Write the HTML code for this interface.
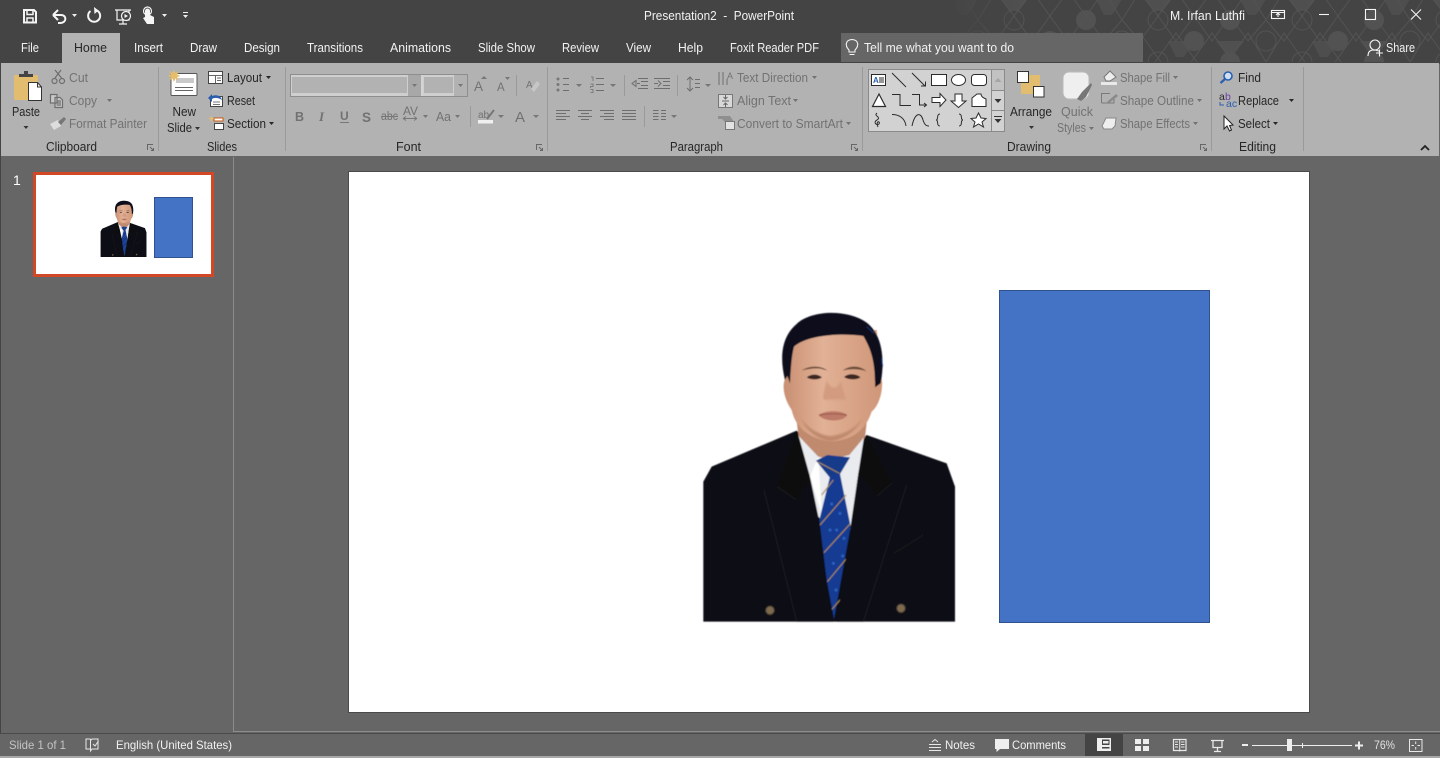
<!DOCTYPE html>
<html><head><meta charset="utf-8"><style>
html,body{margin:0;padding:0;background:#666;overflow:hidden}
svg{display:block}
text{font-family:"Liberation Sans",sans-serif;font-size:12.5px;white-space:pre}
.d{fill:#262626}.g{fill:#727272}.w{fill:#f2f2f2}
.l{stroke:#262626;fill:none}.n{stroke:#6e6e6e;fill:none}.wl{stroke:#f5f5f5;fill:none}
</style></head><body>
<svg xmlns="http://www.w3.org/2000/svg" width="1440" height="758" viewBox="0 0 1440 758">
<defs>
<pattern id="hx" width="144" height="84" patternUnits="userSpaceOnUse" x="1122" y="-1">
<polygon points="22,0 50,0 36,18" fill="#4f4f4f"/>
<polygon points="94,42 122,42 108,60" fill="#505050"/>
<polygon points="118,0 144,0 134,16 126,16" fill="#4e4e4e"/>
<polygon points="46,42 72,42 62,58 54,58" fill="#4e4e4e"/>
<circle cx="36" cy="21" r="10" fill="#444" stroke="#535353"/>
<circle cx="108" cy="21" r="10" fill="#525252"/>
<circle cx="0" cy="42" r="10" fill="#444" stroke="#535353"/>
<circle cx="144" cy="42" r="10" fill="#444" stroke="#535353"/>
<circle cx="72" cy="42" r="10" fill="#525252"/>
<circle cx="36" cy="63" r="10" fill="#444" stroke="#535353"/>
<circle cx="108" cy="63" r="10" fill="#525252"/>
<g fill="none" stroke="#535353" stroke-width="1">
<path d="M0,21 L18,-8 L54,42 L90,-8 L126,42 L144,21"/>
<path d="M0,21 L18,42 L54,-8 L90,42 L126,-8 L144,21"/>
<path d="M0,63 L18,34 L54,84 L90,34 L126,84 L144,63"/>
<path d="M0,63 L18,84 L54,34 L90,84 L126,34 L144,63"/>
</g>
</pattern>
<linearGradient id="fd" x1="0" x2="1" y1="0" y2="0"><stop offset="0" stop-color="#000"/><stop offset=".14" stop-color="#fff"/></linearGradient>
<mask id="fm"><rect x="945" y="0" width="495" height="64" fill="url(#fd)"/></mask>
<linearGradient id="sk" x1="0" x2="1" y1="0" y2="0"><stop offset="0" stop-color="#c98f72"/><stop offset=".4" stop-color="#e2b196"/><stop offset="1" stop-color="#cf9678"/></linearGradient>
<filter id="bl"><feGaussianBlur stdDeviation="2.500"/></filter>
<filter id="soft" x="-5%" y="-5%" width="110%" height="110%"><feGaussianBlur stdDeviation="1.200"/></filter>
<g id="person">
<g filter="url(#soft)">
<path d="M40,965 L40,545 L65,500 L320,392 L430,500 L530,405 L770,490 L795,560 L795,965Z" fill="#111113"/>
<path d="M318,350 L326,410 L390,475 L478,470 L525,412 L532,350Z" fill="#c08a6e"/>
<path d="M326,408 L385,470 L420,478 L478,465 L522,412 L505,520 L482,690 L430,700 L385,650 L360,530Z" fill="#e9ebee"/>
<path d="M360,530 L395,640 L385,470Z" fill="#fff"/>
<path d="M378,482 L412,465 L480,472 L450,522 L422,536Z" fill="#123a8a"/>
<path d="M420,530 L450,522 L482,680 L432,958 L410,840 L388,660Z" fill="#123a92"/>
<g stroke="#a98a55" stroke-width="3.200" fill="none"><path d="M384,486 L448,520"/><path d="M395,585 L430,540"/><path d="M390,675 L468,585"/><path d="M402,758 L480,672"/><path d="M412,845 L470,775"/><path d="M426,928 L454,895"/></g>
<g fill="#2a63c0"><circle cx="425" cy="612" r="4.500"/><circle cx="450" cy="640" r="4.500"/><circle cx="420" cy="690" r="4.500"/><circle cx="440" cy="690" r="4.500"/><circle cx="462" cy="715" r="4.500"/><circle cx="430" cy="790" r="4.500"/><circle cx="458" cy="768" r="4.500"/><circle cx="438" cy="870" r="4.500"/></g>
<path d="M320,392 L260,560 L320,600 L358,540Z" fill="#0f0f11"/>
<path d="M222,570 L262,560 L320,600 L358,540 L425,940 L430,965 L320,965Z" fill="#111113"/>
<path d="M530,405 L505,520 L560,585 L605,550Z" fill="#0f0f11"/>
<path d="M650,555 L562,587 L505,520 L440,965 L520,965Z" fill="#111113"/>
<path d="M222,570 L320,965 M650,555 L520,965 M262,560 L320,600 M562,587 L605,550 M612,760 L700,705" stroke="#222226" stroke-width="2" fill="none"/>
<path d="M284,240 C276,262 283,298 305,330 C315,372 340,410 420,425 C500,420 530,380 545,335 C570,315 580,265 575,238 L560,90 L300,90Z" fill="url(#sk)"/>
<path d="M330,350 C350,400 390,420 420,425 C460,420 500,395 520,350 C500,385 460,405 420,408 C390,405 350,385 330,350Z" fill="#c08a6e" filter="url(#bl)"/>
<path d="M410,240 C405,270 395,290 402,298 L464,298 C470,290 458,270 452,240 C445,270 420,270 410,240Z" fill="#d39c80" filter="url(#bl)"/>
<path d="M385,345 C405,330 455,330 472,345 C460,366 405,368 385,345Z" fill="#bd7a68"/>
<path d="M388,346 C410,340 450,340 470,346" stroke="#84453b" stroke-width="2" fill="none"/>
<path d="M400,290 C410,310 460,310 470,290 L460,300 C445,306 420,306 410,300Z" fill="#b57d62" filter="url(#bl)"/>
<path d="M335,212 C355,196 395,196 412,212 L392,206 C375,204 355,206 335,212Z" fill="#6b4a36"/>
<path d="M458,212 C478,195 510,196 530,214 C510,206 480,205 458,212Z" fill="#6b4a36"/>
<path d="M350,232 C365,220 385,222 396,232 C385,240 362,240 350,232Z" fill="#3a2620"/>
<path d="M462,231 C475,220 498,220 512,232 C498,240 475,240 462,231Z" fill="#3a2620"/>
<path d="M285,240 C268,170 275,110 320,72 C360,32 470,25 530,68 C578,105 585,180 572,250 L555,262 C556,190 545,150 520,108 C450,98 350,106 312,140 C304,170 302,215 300,250 L292,228Z" fill="#0c0f1c"/>
<path d="M530,80 L552,100 M575,175 L578,200" stroke="#1c3f8a" stroke-width="2"/>
<g fill="#7d6a50" stroke="#3b342a" stroke-width="3"><circle cx="240" cy="931" r="13"/><circle cx="633" cy="925" r="13"/></g>
</g>
</g>
</defs>

<!-- base -->
<rect width="1440" height="63" fill="#444"/>
<rect width="1440" height="64" fill="url(#hx)" mask="url(#fm)"/>
<rect x="0" y="62" width="1440" height="2" fill="#444"/>
<rect x="1" y="63" width="1438" height="93" fill="#b2b2b2"/>
<rect x="0" y="63" width="1" height="93" fill="#444"/>
<rect x="62" y="33" width="58" height="31" fill="#b2b2b2"/>
<rect x="841" y="33" width="302" height="29" fill="#666"/>

<!-- QAT -->
<g class="wl" stroke-width="2">
<path d="M24,10 H34 L36,12 V22.500 H24Z"/>
<path d="M27,10.500 V14.500 H33 V10.500 M27,22 V18 H33 V22" stroke-width="1.500"/>
<path d="M53,15 L58,10 M53,15 L58,20 M53,15 H61 C67,15 67,23 60,23 H58" stroke-width="2"/>
<path d="M97,10.500 A6,6 0 1 1 90.500,11" stroke-width="2"/>
<path d="M115,10 H131 M117,10 V20 H129 V10 M123,20 V24 M119,24 H127" stroke-width="1.200"/>
<circle cx="126" cy="16" r="4.500" stroke-width="1.200" fill="#444"/>
</g>
<path d="M94,7 L98.500,10.500 L94.500,14Z" fill="#f5f5f5"/>
<path d="M124.500,14 L128,16 L124.500,18Z" fill="#f5f5f5"/>
<path d="M145,17 V11 A2.500,2.500 0 0 1 150,11 V15 L154,17 V24 H147 L143,18Z" fill="#f5f5f5"/>
<circle cx="147.500" cy="11" r="4" fill="none" stroke="#f5f5f5" stroke-width="1.200"/>
<g fill="#eee"><path d="M72,14 H77 L74.500,17Z"/><path d="M162,14 H167 L164.500,17Z"/><path d="M183,15 H188 L185.500,18Z"/><rect x="183" y="12" width="5" height="1"/></g>

<!-- title -->
<text class="w" x="644" y="20" textLength="150" lengthAdjust="spacingAndGlyphs">Presentation2  -  PowerPoint</text>
<text class="w" x="1170" y="20" textLength="75" lengthAdjust="spacingAndGlyphs">M. Irfan Luthfi</text>
<g class="wl" stroke-width="1.100">
<rect x="1271.500" y="10.500" width="13" height="8"/><path d="M1271,12.500 H1285 M1278,17 V13.500 M1276,15 L1278,13 L1280,15"/>
<path d="M1319,14.500 H1329"/>
<rect x="1365.500" y="9.500" width="10" height="10"/>
<path d="M1411,9.500 L1421,19.500 M1421,9.500 L1411,19.500"/>
<circle cx="1375" cy="45" r="5"/><path d="M1368,56 C1368,50 1372,50 1375,50 L1379,51 M1376,53 H1383 M1379.500,49.500 V56.500"/>
<path d="M849,50 C845,46 845,40 852,39.500 C859,40 859,46 855,50 V52 H849Z M849.500,54.500 H854.500"/>
</g>

<!-- tabs -->
<g class="w">
<text x="21" y="52" textLength="18" lengthAdjust="spacingAndGlyphs">File</text>
<text x="134" y="52" textLength="29" lengthAdjust="spacingAndGlyphs">Insert</text>
<text x="190" y="52" textLength="27" lengthAdjust="spacingAndGlyphs">Draw</text>
<text x="244" y="52" textLength="36" lengthAdjust="spacingAndGlyphs">Design</text>
<text x="307" y="52" textLength="56" lengthAdjust="spacingAndGlyphs">Transitions</text>
<text x="390" y="52" textLength="61" lengthAdjust="spacingAndGlyphs">Animations</text>
<text x="478" y="52" textLength="57" lengthAdjust="spacingAndGlyphs">Slide Show</text>
<text x="562" y="52" textLength="37" lengthAdjust="spacingAndGlyphs">Review</text>
<text x="626" y="52" textLength="25" lengthAdjust="spacingAndGlyphs">View</text>
<text x="678" y="52" textLength="25" lengthAdjust="spacingAndGlyphs">Help</text>
<text x="730" y="52" textLength="89" lengthAdjust="spacingAndGlyphs">Foxit Reader PDF</text>
<text x="864" y="52" textLength="150" lengthAdjust="spacingAndGlyphs">Tell me what you want to do</text>
<text x="1386" y="52" textLength="29" lengthAdjust="spacingAndGlyphs">Share</text>
</g>
<text class="d" x="74" y="52" textLength="33" lengthAdjust="spacingAndGlyphs">Home</text>

<!-- separators -->
<g stroke="#9a9a9a"><path d="M158.500,67 V151 M285.500,67 V151 M547.500,67 V151 M862.500,67 V151 M1211.500,67 V151 M1303.500,67 V151"/>
<path d="M624.500,75 V96 M677.500,75 V96 M516.500,75 V96 M644.500,106 V127 M470.500,106 V127"/></g>

<!-- clipboard -->
<rect x="14" y="75" width="24" height="25" rx="1.500" fill="#e3bd6f"/>
<path d="M19,77 V74 H24 V71 H28 V74 H33 V77Z" fill="#444"/>
<path d="M28.500,82.500 H37.500 L41.500,87 V100.500 H28.500Z" fill="#fff" stroke="#333"/>
<path d="M37.500,82.500 V87 H41.500" fill="none" stroke="#333"/>
<text class="d" x="12" y="116" textLength="28" lengthAdjust="spacingAndGlyphs">Paste</text>
<path d="M23.500,126 H28.500 L26,129Z" fill="#333"/>
<g class="n" stroke-width="1.200"><circle cx="54.500" cy="81" r="2.500"/><circle cx="62" cy="81" r="2.500"/><path d="M55,78 L61,70 M61.500,78 L55,70"/>
<path d="M50.500,94.500 H57 V103 H50.500Z M55,97.500 H60 L62.500,100 V107.500 H55Z" fill="#c8c8c8"/><path d="M56.500,101 H61 M56.500,103 H61 M56.500,105 H61"/></g>
<path d="M50,124 L58,120 L61,126 L54,130Z" fill="#ddd"/><path d="M58,122 L64,117 L66,119 L61,125Z" fill="#777"/>
<g class="g">
<text x="69" y="82" textLength="19" lengthAdjust="spacingAndGlyphs">Cut</text>
<text x="69" y="105" textLength="28" lengthAdjust="spacingAndGlyphs">Copy</text>
<text x="69" y="128" textLength="78" lengthAdjust="spacingAndGlyphs">Format Painter</text>
<path d="M107,99 H112 L109.500,102Z"/>
</g>
<text class="d" x="46" y="151" textLength="51" lengthAdjust="spacingAndGlyphs">Clipboard</text>

<!-- slides -->
<rect x="171" y="73.500" width="26" height="22" rx="1" fill="#fff" stroke="#555"/>
<rect x="176" y="78" width="18" height="5" fill="#c9c9c9"/>
<path d="M175,87.500 H193 M175,90.500 H193" stroke="#666"/>
<path d="M174,70 L175.500,73 L179,71 L177,74.500 L180.500,76 L177,77 L179,80.500 L175.500,78.500 L174,82 L172.500,78.500 L169,80.500 L171,77 L167.500,76 L171,74.500 L169,71 L172.500,73Z" fill="#e5bd6b"/>
<text class="d" x="172.500" y="116" textLength="23.500" lengthAdjust="spacingAndGlyphs">New</text>
<text class="d" x="167" y="132" textLength="25" lengthAdjust="spacingAndGlyphs">Slide</text>
<path d="M195,127 H200 L197.500,130Z" fill="#333"/>
<rect x="208.500" y="71.500" width="14" height="12" fill="#fff" stroke="#444"/>
<path d="M209,75.500 H222 M215.500,76 V83 M217,78 H221 M217,80.500 H221" stroke="#666" fill="none"/>
<rect x="210.500" y="96.500" width="12" height="10" fill="#fff" stroke="#444"/>
<path d="M213,102 H220 M213,104.500 H220" stroke="#777"/>
<path d="M208,98 L212,94 L212,96 C217,94 221,96 222,100 C219,98 215,97 212,99 L212,102Z" fill="#2b5fae"/>
<rect x="214" y="118" width="9" height="3" fill="#fff" stroke="#c8590f"/>
<rect x="214.500" y="123.500" width="9" height="6" fill="#fff" stroke="#444"/>
<path d="M211.500,116 L212.500,118 L214.500,118.500 L212.500,119.500 L211.500,122 L210.500,119.500 L208.500,118.500 L210.500,118Z" fill="#e5bd6b"/>
<g class="d">
<text x="227" y="82" textLength="35" lengthAdjust="spacingAndGlyphs">Layout</text>
<text x="227" y="105" textLength="28" lengthAdjust="spacingAndGlyphs">Reset</text>
<text x="227" y="128" textLength="39" lengthAdjust="spacingAndGlyphs">Section</text>
<path d="M266,76 H271 L268.500,79Z"/><path d="M269,122 H274 L271.500,125Z"/>
</g>
<text class="d" x="207" y="151" textLength="30" lengthAdjust="spacingAndGlyphs">Slides</text>

<!-- font -->
<rect x="290.500" y="74.500" width="177" height="22" fill="#b2b2b2" stroke="#8e8e8e"/>
<rect x="291" y="75" width="117" height="21" fill="#cfcfcf"/>
<rect x="292" y="77" width="115" height="16" fill="#b2b2b2"/>
<rect x="408" y="75" width="13" height="21" fill="#a8a8a8"/>
<rect x="421" y="75" width="2" height="21" fill="#d4d4d4"/>
<rect x="423" y="75" width="31" height="21" fill="#cfcfcf"/>
<rect x="424" y="77" width="29" height="16" fill="#b2b2b2"/>
<g fill="#777"><path d="M412,84 H417 L414.500,87Z"/><path d="M458,84 H463 L460.500,87Z"/>
<path d="M423,115 H428 L425.500,118Z"/><path d="M455,115 H460 L457.500,118Z"/>
<path d="M498,115 H504 L501,118Z"/><path d="M533,115 H539 L536,118Z"/>
<path d="M484,76 L487,79 H481Z"/><path d="M505,77 H510 L507.500,80Z"/></g>
<g class="g" style="font-size:13px">
<text x="295" y="121" font-weight="bold" style="font-size:12.500px">B</text>
<text x="319" y="121" font-style="italic" style="font-size:13px;font-weight:bold;font-family:'Liberation Serif',serif">I</text>
<text x="340" y="120" style="font-size:12px;font-weight:bold">U</text>
<text x="362" y="122" style="font-size:13.500px;font-weight:bold">S</text>
<text x="381" y="120" textLength="17" lengthAdjust="spacingAndGlyphs" style="font-size:11.500px">abc</text>
<text x="403" y="115" textLength="15" lengthAdjust="spacingAndGlyphs" style="font-size:11.500px">AV</text>
<text x="436" y="121" textLength="15" lengthAdjust="spacingAndGlyphs">Aa</text>
<text x="474" y="91" style="font-size:13.500px">A</text>
<text x="497" y="91" style="font-size:11.500px">A</text>
<text x="515" y="122" style="font-size:15px">A</text>
</g>
<path d="M340,122.500 H349 M381,116.500 H398 M403,118.500 H417 M403,118.500 L406,116.500 M403,118.500 L406,120.500 M417,118.500 L414,116.500 M417,118.500 L414,120.500" stroke="#777" fill="none"/>
<text class="g" x="526" y="88" style="font-size:10px">A</text>
<path d="M531,89 L537,81 L540,84 L534,92Z" fill="#c6c6c6"/>
<text class="g" x="478" y="118" style="font-size:10px">ab</text>
<path d="M487,119 L494,110" stroke="#777" stroke-width="2"/>
<rect x="478" y="120" width="15" height="3.500" fill="#f0f0f0"/>
<text class="d" x="396" y="151" textLength="25" lengthAdjust="spacingAndGlyphs">Font</text>

<!-- paragraph -->
<g fill="#777">
<circle cx="558" cy="79" r="1.500"/><circle cx="558" cy="84.500" r="1.500"/><circle cx="558" cy="90" r="1.500"/>
<path d="M576,84 H582 L579,87Z M610,84 H616 L613,87Z M705,84 H711 L708,87Z M671,115 H677 L674,118Z"/>
</g>
<g class="n">
<path d="M563,78.500 H569 M563,84.500 H569 M563,90.500 H569"/>
<path d="M596,78.500 H604 M596,84.500 H604 M596,90.500 H604"/>
<path d="M591,77 H593 V81 M590.500,84 H593 V86.500 H590.500 V88 M590.500,89.500 H593 V92.500 H590.500" stroke-width=".8"/>
<path d="M632,83.500 L636,80.500 V86.500Z M637,83.500 H640 M638,78.500 H648 M641,81.500 H648 M641,85.500 H648 M638,88.500 H648" />
<path d="M654,83.500 H658 M658,80.500 L661,83.500 L658,86.500 M654,78.500 H670 M663,81.500 H670 M663,85.500 H670 M654,88.500 H670"/>
<path d="M690,77 V91 M687,80 L690,77 L693,80 M687,88 L690,91 L693,88 M695,79.500 H700 M695,83.500 H700 M695,87.500 H700"/>
<path d="M556,110.500 H570 M556,113.500 H566 M556,116.500 H570 M556,119.500 H566"/>
<path d="M578,110.500 H592 M581,113.500 H589 M578,116.500 H592 M581,119.500 H589"/>
<path d="M600,110.500 H614 M604,113.500 H614 M600,116.500 H614 M604,119.500 H614"/>
<path d="M622,110.500 H636 M622,113.500 H636 M622,116.500 H636 M622,119.500 H636"/>
<path d="M653,110.500 H658.500 M653,113.500 H658.500 M653,116.500 H658.500 M653,119.500 H658.500 M661,110.500 H666 M661,113.500 H666 M661,116.500 H666 M661,119.500 H666"/>
<path d="M719,72 V85 M723,72 V85 M727,79 V85"/>
</g>
<text class="g" x="727" y="79" style="font-size:9px">A</text>
<rect x="718.500" y="94.500" width="14" height="13" fill="#d8d8d8" stroke="#777"/>
<path d="M722,101 H729 M725.500,95 V99 M723.500,97 L725.500,99 L727.500,97 M725.500,107 V103 M723.500,105 L725.500,103 L727.500,105" stroke="#666" fill="none"/>
<path d="M718,116 H730 L734,122 H725 L722,119 H718Z" fill="#8f8f8f"/>
<rect x="725.500" y="121.500" width="9" height="8" fill="#e2e2e2" stroke="#777"/>
<g class="g">
<text x="737" y="82" textLength="71" lengthAdjust="spacingAndGlyphs">Text Direction</text>
<text x="737" y="105" textLength="54" lengthAdjust="spacingAndGlyphs">Align Text</text>
<text x="737" y="128" textLength="106" lengthAdjust="spacingAndGlyphs">Convert to SmartArt</text>
<path d="M812,76 H817 L814.500,79Z M793,99 H798 L795.500,102Z M846,122 H851 L848.500,125Z"/>
</g>
<text class="d" x="670" y="151" textLength="53" lengthAdjust="spacingAndGlyphs">Paragraph</text>

<!-- gallery -->
<rect x="868.500" y="69.500" width="136" height="62" fill="#d2d2d2" stroke="#8a8a8a"/>
<rect x="991" y="70" width="13" height="20" fill="#c2c2c2"/>
<path d="M991.500,70 V131 M991,90.500 H1004 M991,110.500 H1004" stroke="#8a8a8a"/>
<path d="M994.500,82 L998,78 L1001.500,82Z" fill="#a5a5a5"/>
<path d="M994.500,99 H1001.500 L998,103Z" fill="#333"/>
<path d="M994,116.500 H1002" stroke="#333"/><path d="M994.500,119 H1001.500 L998,123Z" fill="#333"/>
<g stroke="#2b2b2b" fill="none" stroke-width="1">
<rect x="871.500" y="74.500" width="14" height="11" fill="#fff"/>
<path d="M879,78 H884 M879,80 H884 M879,82 H884"/>
<path d="M892,73 L906,87"/>
<path d="M912,73 L925,86 M921,86 H925.500 V81.500"/>
<rect x="931.500" y="74.500" width="15" height="11" fill="#fff"/>
<ellipse cx="958.500" cy="80" rx="7" ry="5.500" fill="#fff"/>
<rect x="971.500" y="74.500" width="15" height="11" rx="3" fill="#fff"/>
<path d="M879,94 L885.500,106.500 H872.500Z" fill="#fff" stroke-width="1.200"/>
<path d="M892,94.500 H900 V105.500 H911"/>
<path d="M912,94.500 H919.500 V105 H926 M924,103 L926.500,105 L924,107"/>
<path d="M932,97.500 H940 V93.500 L946,100 L940,106.500 V102.500 H932Z" fill="#fff"/>
<path d="M955,94 H962 V101 H966 L958.500,107.500 L951,101 H955Z" fill="#fff"/>
<path d="M972,98 L977,94 H981 C981,97 984,98 986,99 V106.500 H972Z" fill="#fff"/>
<path d="M877,113 C873,116 882,117 877,120 C873,122 876,126 879,124 C881,121 875,120 878,127"/>
<path d="M892,114.500 C899,114.500 905,118 906,126"/>
<path d="M912,126 C915,112 921,112 923,120 C925,126 927,126 929,126"/>
<path d="M940,114 C936,114 939,120 936,120 C939,120 936,126 940,126"/>
<path d="M959,114 C963,114 960,120 963,120 C960,120 963,126 959,126"/>
<path d="M978.500,113 L981,118 L986,118.500 L982,122 L983.500,127 L978.500,124 L973.500,127 L975,122 L971,118.500 L976,118Z" fill="#fff"/>
</g>
<text x="873" y="83" style="font-size:8px;font-weight:bold" fill="#2b5fae">A</text>

<!-- arrange etc -->
<rect x="1021" y="75" width="19" height="19" fill="#e3bd6f"/>
<rect x="1017.500" y="71.500" width="11" height="11" fill="#fff" stroke="#333"/>
<rect x="1033.500" y="86.500" width="10.500" height="10.500" fill="#fff" stroke="#333"/>
<text class="d" x="1010" y="116" textLength="42" lengthAdjust="spacingAndGlyphs">Arrange</text>
<path d="M1029,126 H1034 L1031.500,129Z" fill="#333"/>
<rect x="1063" y="72" width="26" height="27" rx="6" fill="#efefef" stroke="#b9b9b9"/>
<path d="M1077,99 L1082,92 L1091,83 L1092,85 L1086,97 L1081,101Z" fill="#777"/>
<g class="g">
<text x="1061" y="116" textLength="32" lengthAdjust="spacingAndGlyphs">Quick</text>
<text x="1057" y="132" textLength="29" lengthAdjust="spacingAndGlyphs">Styles</text>
<path d="M1089,127 H1094 L1091.500,130Z"/>
<text x="1120" y="82" textLength="50" lengthAdjust="spacingAndGlyphs">Shape Fill</text>
<text x="1120" y="105" textLength="74" lengthAdjust="spacingAndGlyphs">Shape Outline</text>
<text x="1120" y="128" textLength="70" lengthAdjust="spacingAndGlyphs">Shape Effects</text>
<path d="M1173,76 H1178 L1175.500,79Z M1197,99 H1202 L1199.500,102Z M1193,122 H1198 L1195.500,125Z"/>
</g>
<path d="M1104,77 L1110,71 L1116,77 L1110,81 H1106Z" fill="#eee" stroke="#777"/>
<rect x="1101" y="82" width="16" height="3" fill="#e9e9e9"/>
<path d="M1101.500,103 V93.500 H1110 M1101.500,103 H1114 V99" fill="none" stroke="#7a7a7a"/>
<path d="M1107,102 L1116,94 L1118,96 L1109,103Z" fill="#8a8a8a"/>
<path d="M1102,126 L1106,118 H1116 L1115,126 L1112,129 H1104Z" fill="#eee" stroke="#888"/>
<text class="d" x="1007" y="151" textLength="44" lengthAdjust="spacingAndGlyphs">Drawing</text>

<!-- editing -->
<circle cx="1228" cy="76" r="4" fill="#cfe0f2" stroke="#2b5fae" stroke-width="1.600"/>
<path d="M1225,79 L1220.500,83" stroke="#2b5fae" stroke-width="2.200"/>
<text x="1219" y="100" style="font-size:10.500px" fill="#2b2b2b">a</text>
<text x="1225" y="100" style="font-size:10.500px" fill="#6b3fa0">b</text>
<text x="1226" y="107" style="font-size:10.500px" fill="#2b5fae">ac</text>
<path d="M1220,102 V105 H1224" stroke="#2b5fae" fill="none"/>
<path d="M1224,116 V129 L1227,126 L1229.500,131 L1231.500,130 L1229.500,125.500 L1233,125Z" fill="#fff" stroke="#222"/>
<g class="d">
<text x="1238" y="82" textLength="23" lengthAdjust="spacingAndGlyphs">Find</text>
<text x="1238" y="105" textLength="41" lengthAdjust="spacingAndGlyphs">Replace</text>
<text x="1238" y="128" textLength="32" lengthAdjust="spacingAndGlyphs">Select</text>
<path d="M1289,99 H1294 L1291.500,102Z M1273,122 H1278 L1275.500,125Z"/>
</g>
<text class="d" x="1239" y="151" textLength="37" lengthAdjust="spacingAndGlyphs">Editing</text>
<path d="M1421,150 L1425,146 L1429,150" stroke="#222" stroke-width="1.800" fill="none"/>
<g stroke="#666" fill="none"><path d="M147.500,150 V144.500 H153 M150,147 L153.500,150.500 M153.500,148 V150.500 H151"/>
<path d="M536.500,150 V144.500 H542 M539,147 L542.500,150.500 M542.500,148 V150.500 H540"/>
<path d="M851.500,150 V144.500 H857 M854,147 L857.500,150.500 M857.500,148 V150.500 H855"/>
<path d="M1200.500,150 V144.500 H1206 M1203,147 L1206.500,150.500 M1206.500,148 V150.500 H1204"/></g>

<!-- workspace -->
<rect x="0" y="156" width="1440" height="578" fill="#666"/>
<rect x="0" y="156" width="1" height="578" fill="#444"/>
<rect x="233" y="157" width="1" height="575" fill="#8c8c8c"/>
<rect x="233" y="731" width="1207" height="1" fill="#8c8c8c"/>
<rect x="348.500" y="171.500" width="961" height="541" fill="#fff" stroke="#4a4a4a"/>
<use href="#person" transform="translate(690,300) scale(.33333)"/>
<rect x="999.500" y="290.500" width="210" height="332" fill="#4472c4" stroke="#2f528f"/>

<!-- thumb -->
<text fill="#fff" x="13" y="185" style="font-size:14px">1</text>
<rect x="34.500" y="173.500" width="178" height="102" fill="#fff" stroke="#d24726" stroke-width="3"/>
<g transform="translate(36,175) scale(.1823) translate(-349,-172)"><use href="#person" transform="translate(690,300) scale(.33333)"/></g>
<rect x="154.500" y="197.500" width="38" height="60" fill="#4472c4" stroke="#2f528f"/>

<!-- status bar -->
<rect x="0" y="733" width="1440" height="1" fill="#4a4a4a"/>
<rect x="0" y="734" width="1440" height="22" fill="#666"/>
<rect x="0" y="756" width="1440" height="2" fill="#a8a8a8"/>
<rect x="1085" y="734" width="38" height="22" fill="#444"/>
<text x="9" y="749" textLength="57" lengthAdjust="spacingAndGlyphs" fill="#c4c4c4" style="font-size:12px">Slide 1 of 1</text>
<text class="w" x="116" y="749" textLength="116" lengthAdjust="spacingAndGlyphs" style="font-size:12px">English (United States)</text>
<text class="w" x="945" y="749" textLength="30" lengthAdjust="spacingAndGlyphs" style="font-size:12px">Notes</text>
<text class="w" x="1012" y="749" textLength="54" lengthAdjust="spacingAndGlyphs" style="font-size:12px">Comments</text>
<text x="1374" y="749" textLength="21" lengthAdjust="spacingAndGlyphs" fill="#e0e0e0" style="font-size:12px">76%</text>
<g stroke="#e8e8e8" fill="none">
<path d="M90.500,739 H86 V749 H90.500 M90.500,739 V751 L92,749 H98 V739 H92 L90.500,740.500 M93,744 L95,746 L98.500,741"/>
<path d="M929,744.500 H941 M929,747.500 H941 M929,750.500 H941 M932,742 L935,739.500 L938,742"/>
<path d="M1173.500,739.500 H1186 V750.500 H1173.500Z" stroke-width="1.200"/>
<path d="M1179.700,739.500 V751.500 M1175,742 H1178 M1175,744.500 H1178 M1175,747 H1178 M1181,742 H1184.500 M1181,744.500 H1184.500 M1181,747 H1184.500"/>
<path d="M1211,740.500 H1224 M1213,740.500 V747.500 H1222 V740.500 M1217.500,747.500 V751 M1214,751.500 H1221" stroke-width="1.300"/>
<rect x="1409.500" y="739.500" width="12.500" height="12"/>
<path d="M1415.700,741.500 V744 M1415.700,747 V749.500 M1411.500,745.500 H1414 M1417.500,745.500 H1420"/>
</g>
<path d="M995,739 H1009 V749 H1000 L996.500,752 V749 H995Z" fill="#eee"/>
<rect x="1097" y="738" width="14" height="13" fill="#eee"/>
<rect x="1102" y="739.500" width="7.500" height="5.500" fill="#444"/><rect x="1103" y="741" width="5.500" height="2.500" fill="#eee"/>
<rect x="1102" y="747" width="7.500" height="1.500" fill="#444"/>
<g fill="#eee"><rect x="1135" y="739" width="6" height="5"/><rect x="1143" y="739" width="6" height="5"/><rect x="1135" y="746" width="6" height="5"/><rect x="1143" y="746" width="6" height="5"/>
<rect x="1242" y="744" width="6" height="2"/><rect x="1252" y="745" width="100" height="1"/><rect x="1287" y="739" width="5" height="12"/><rect x="1302" y="743" width="1" height="5"/>
<rect x="1355" y="744.500" width="8" height="2"/><rect x="1358" y="741.500" width="2" height="8"/></g>
</svg>
</body></html>
